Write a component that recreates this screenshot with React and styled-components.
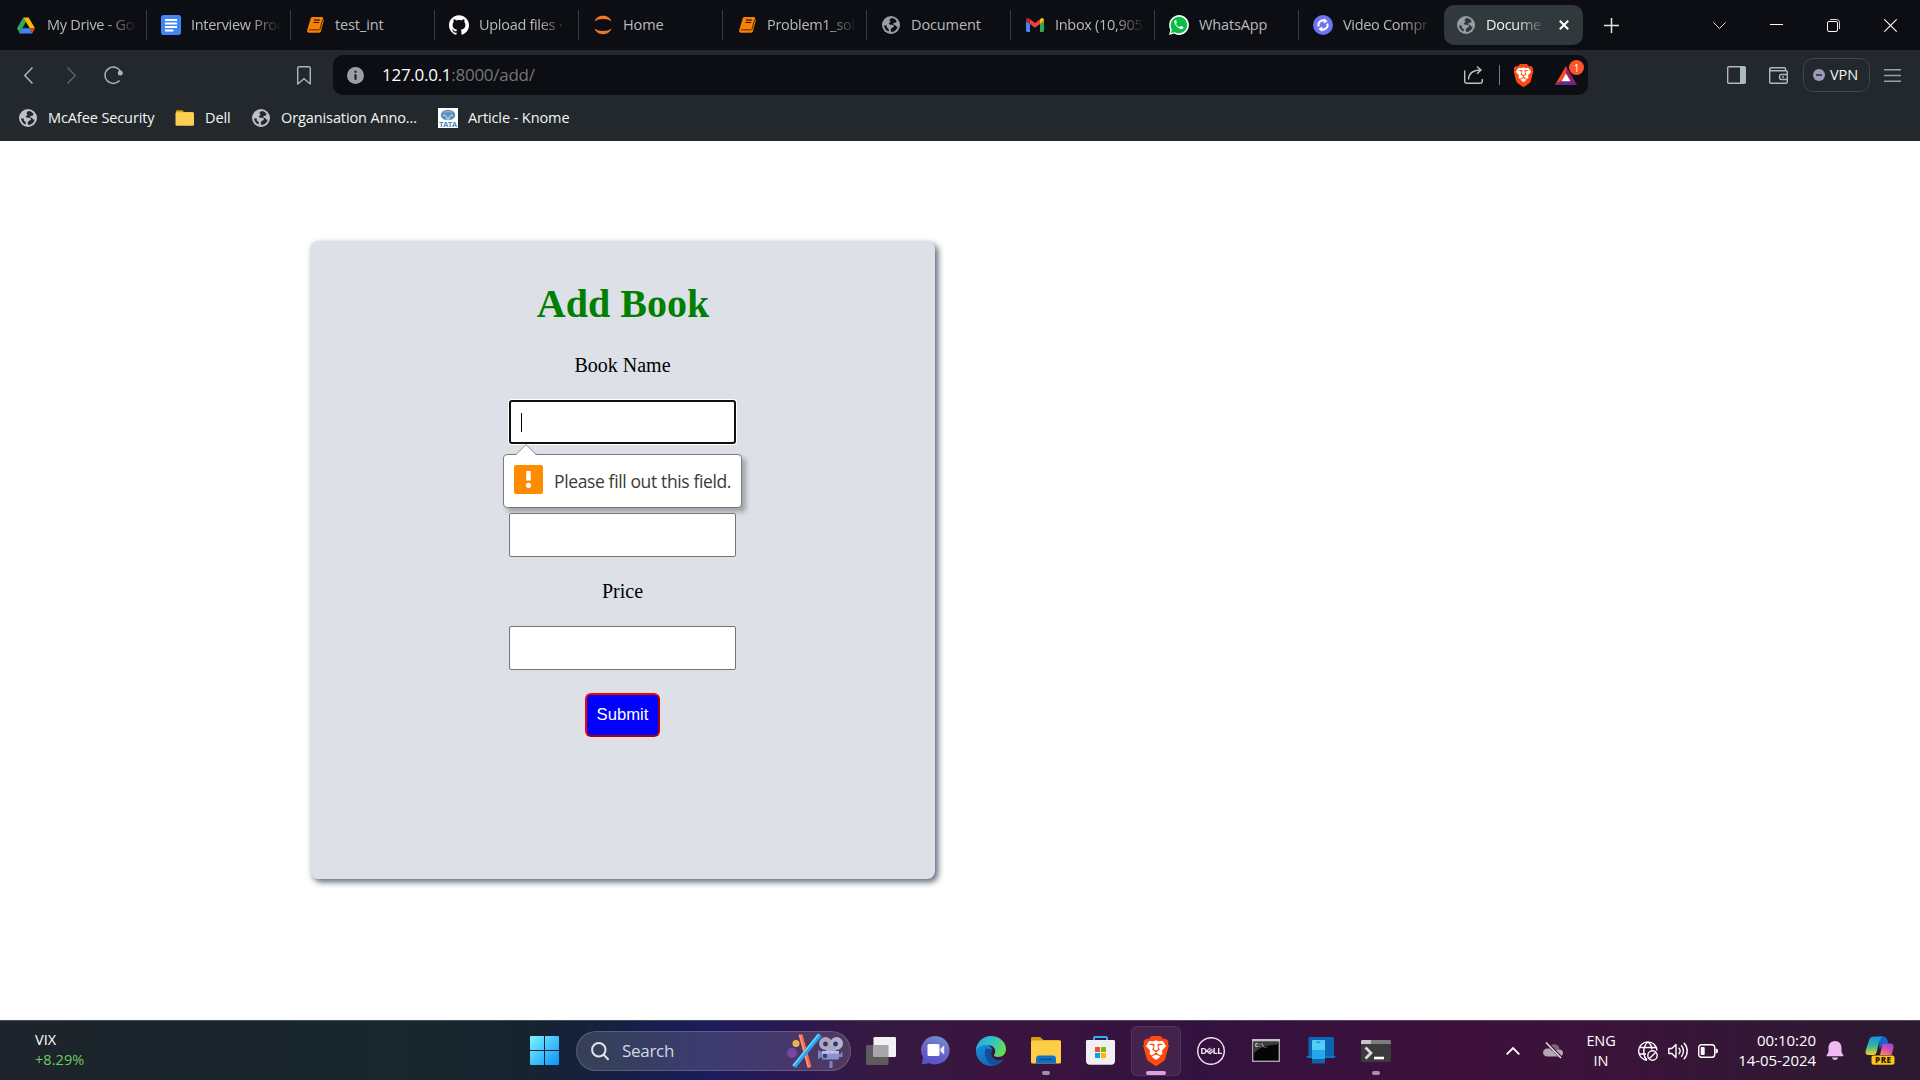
import React from "react";
import styled, { createGlobalStyle, css } from "styled-components";
import { SiBrave, SiDell, SiGithub } from "react-icons/si";

const UI = `"Open Sans", "Noto Sans", sans-serif`;

const GlobalStyle = createGlobalStyle`
  * { box-sizing: border-box; }
  html, body { margin: 0; padding: 0; background: #fff; }
  body { width: 1920px; height: 1080px; overflow: hidden; font-family: ${UI}; }
`;

const Screen = styled.div`
  width: 1920px;
  height: 1080px;
  display: flex;
  flex-direction: column;
`;

/* ---------- shared ---------- */

const Icon = styled.svg`
  display: block;
  flex: none;
  width: ${(p) => p.$w}px;
  height: ${(p) => p.$h || p.$w}px;
  margin-left: ${(p) => p.$ml || 0}px;
  overflow: visible;
`;

/* ---------- tab strip ---------- */

const TabStrip = styled.header`
  height: 50px;
  background: #0d0e13;
  display: flex;
  align-items: center;
  padding-left: 3px;
`;

const Tab = styled.div`
  flex: none;
  width: 144px;
  height: 30px;
  padding-left: ${(p) => (p.$first ? 13 : 14)}px;
  display: flex;
  align-items: center;
  gap: ${(p) => (p.$first ? 11 : 10)}px;
  border-right: 1px solid ${(p) => (p.$line ? "#3b3c40" : "transparent")};
  color: #b9babd;

  ${(p) =>
    p.$active &&
    css`
      width: 139px;
      height: 40px;
      margin-left: 1px;
      padding-left: 12px;
      border: 0;
      border-radius: 10px;
      background: #31393d;
      color: #f1f2f3;
    `}
`;

const TabLabel = styled.span`
  width: ${(p) => p.$w || 90}px;
  overflow: hidden;
  white-space: nowrap;
  font-size: 14.5px;
  line-height: 20px;
  letter-spacing: ${(p) => (p.$fade ? -0.3 : -0.12)}px;
  ${(p) => p.$fade && "mask-image: linear-gradient(90deg, #000 calc(100% - 30px), transparent);"}
`;

/* ---------- toolbar ---------- */

const Toolbar = styled.div`
  height: 50px;
  background: #22282b;
  display: flex;
  align-items: center;
  padding-left: 24px;
`;

const AddressBar = styled.div`
  width: 1255px;
  height: 40px;
  margin-left: 22px;
  padding-left: 14px;
  border-radius: 10px;
  background: #0d0e13;
  display: flex;
  align-items: center;
`;

const Url = styled.div`
  width: 1082px;
  margin-left: 18px;
  font-size: 17px;
  line-height: 24px;
  letter-spacing: -0.27px;
  color: #74767a;
  b { font-weight: 400; color: #fff; }
`;

const Divider = styled.i`
  width: 1px;
  height: 20px;
  margin: 0 12px 0 15px;
  background: #77797d;
`;

const Rewards = styled.div`
  position: relative;
  margin-left: 20px;
`;

const Badge = styled.span`
  position: absolute;
  left: 14px;
  top: -6px;
  width: 15px;
  height: 15px;
  border-radius: 8px;
  background: #fb542b;
  color: #fff;
  font-size: 10px;
  line-height: 16px;
  text-align: center;
`;

const VpnButton = styled.button`
  width: 67px;
  height: 34px;
  margin: 0 0 0 15px;
  padding: 0 0 0 9px;
  border: 1px solid #3d484c;
  border-radius: 10px;
  background: transparent;
  display: flex;
  align-items: center;
  gap: 5px;
  font: 14.5px/20px ${UI};
  letter-spacing: -0.1px;
  color: #f2f4f5;
`;

const Bookmarks = styled.nav`
  height: 41px;
  background: #22282b;
  display: flex;
  align-items: flex-start;
  padding: 8px 0 0 18px;
`;

const Bookmark = styled.div`
  flex: none;
  width: ${(p) => p.$w}px;
  display: flex;
  align-items: center;
  gap: 10px;
  white-space: nowrap;
  font-size: 14.5px;
  line-height: 20px;
  letter-spacing: -0.1px;
  color: #f4f5f5;
`;

/* ---------- page ---------- */

const Page = styled.main`
  height: 879px;
  background: #fff;
  padding: 100px 0 0 310px;
`;

const Card = styled.form`
  width: 625px;
  height: 638px;
  padding-top: 40px;
  border-radius: 8px;
  background: #dde0e7;
  box-shadow: 3px 3px 6px #5a6779;
  display: flex;
  flex-direction: column;
  align-items: center;
  font-family: "Liberation Serif", "Times New Roman", serif;
`;

const Title = styled.h1`
  margin: 0;
  padding-left: 1px;
  font-size: 40px;
  line-height: 46px;
  color: #008000;
`;

const Label = styled.label`
  margin-top: ${(p) => p.$mt}px;
  font-size: 20px;
  line-height: 23px;
  color: #000;
`;

const Field = styled.div`
  position: relative;
  width: 227px;
  height: 44px;
  margin-top: ${(p) => p.$mt}px;
`;

const Input = styled.input`
  display: block;
  width: 227px;
  height: 44px;
  border: 1px solid #767676;
  border-radius: 2px;
  background: #fff;
  outline: 0;
  ${(p) =>
    p.$focused &&
    css`
      border: 2px solid #101010;
      border-radius: 3px;
      box-shadow: 0 0 0 1px #fff;
    `}
`;

const Caret = styled.i`
  position: absolute;
  left: 12px;
  top: 13px;
  width: 1px;
  height: 19px;
  background: #000;
`;

const Bubble = styled.div`
  position: absolute;
  left: -6px;
  top: 54px;
  width: 239px;
  height: 54px;
  padding: 0 0 4px 10px;
  border: 1px solid #7b7b7d;
  border-radius: 4px;
  background: #fff;
  box-shadow: 4px 4px 5px rgba(0, 0, 0, 0.28);
  display: flex;
  align-items: center;
  gap: 11px;
  white-space: nowrap;
  font: 400 17.5px/24px ${UI};
  letter-spacing: -0.37px;
  color: #3a3a3a;
`;

const BubbleText = styled.span`
  padding-top: 4px;
`;

const BubbleArrow = styled.svg`
  position: absolute;
  left: 11px;
  top: -11px;
  width: 22px;
  height: 12px;
`;

const Submit = styled.button`
  width: 75px;
  height: 44px;
  margin-top: 23px;
  padding: 0;
  border: 2px outset #f00;
  border-radius: 6px;
  background: #00f;
  color: #fff;
  font: 16.67px "Liberation Sans", Arial, sans-serif;
`;

/* ---------- taskbar ---------- */

const Taskbar = styled.footer`
  height: 60px;
  border-top: 1px solid #4a4c55;
  background: linear-gradient(90deg, #1e242b 0, #1a252b 200px, #18272e 430px, #17242f 520px, #152044 620px, #1d1c5c 715px, #2b1852 790px, #351a42 870px, #3a143f 1000px, #34123f 1200px, #3d103b 1450px, #3b133a 1600px, #311834 1800px, #2c1a30 1920px);
  display: flex;
  align-items: center;
  color: #fff;
`;

const Widget = styled.div`
  width: 530px;
  padding: 0 0 2px 35px;
  font-size: 14.5px;
  line-height: 20px;
  letter-spacing: 0.05px;
  span { display: block; color: #6ccb5f; }
`;

const SearchPill = styled.div`
  width: 275px;
  height: 40px;
  margin: 0 2px 0 17px;
  padding: 0 7px 0 14px;
  border: 1px solid rgba(255, 255, 255, 0.17);
  border-radius: 20px;
  background: rgba(255, 255, 255, 0.14);
  display: flex;
  align-items: center;
`;

const SearchText = styled.span`
  flex: 1;
  margin-left: 13px;
  font-size: 17px;
  line-height: 24px;
  letter-spacing: -0.3px;
  color: #d6d7e2;
`;

const AppSlot = styled.div`
  position: relative;
  width: 55px;
  height: 59px;
  display: flex;
  align-items: center;
  justify-content: center;
`;

const ActiveTile = styled.div`
  width: 50px;
  height: 50px;
  border: 1px solid rgba(255, 255, 255, 0.08);
  border-radius: 6px;
  background: rgba(255, 255, 255, 0.07);
  display: flex;
  align-items: center;
  justify-content: center;
`;

const Running = styled.i`
  position: absolute;
  bottom: 5px;
  left: calc(50% - ${(p) => (p.$active ? 10 : 4)}px);
  width: ${(p) => (p.$active ? 20 : 8)}px;
  height: 4px;
  border-radius: 2px;
  background: ${(p) => (p.$active ? "#dd9fe3" : "#a391a9")};
`;

const Tray = styled.div`
  flex: 1;
  display: flex;
  align-items: center;
  padding-left: 103px;
`;

const TrayText = styled.div`
  width: ${(p) => p.$w}px;
  margin-left: ${(p) => p.$ml}px;
  padding-bottom: ${(p) => p.$lift || 0}px;
  white-space: nowrap;
  display: flex;
  flex-direction: column;
  align-items: ${(p) => p.$align};
  font-size: ${(p) => p.$size}px;
  line-height: 20px;
  letter-spacing: ${(p) => p.$ls}px;
`;

/* ---------- drawings ---------- */

const Globe = ({ fg = "#9a9ea3", bg = "#0d0e13", w = 18 }) => (
  <Icon $w={w} viewBox="0 0 18 18">
    <circle cx="9" cy="9" r="9" fill={fg} />
    <path
      fill={bg}
      d="M9.6 2c-1 .5-1.800 1.100-2 2-.2 1 .8 1 .9 1.700 0 .8-1.200.7-1.600 1.400-.4.800.4 1.500 1.500 1.600 1.500 0 2.700-.2 3.300.700.5.800-.1 1.700-.9 2.200-.9.500-1.700.9-2 1.900-.2.900.2 1.700.7 2.500 3.200-.3 5.700-2.600 6.300-5.600-.7.400-1.500.3-1.900-.4-.5-1-1.600-1-2.300-1.500-.6-.5-.4-1.300.3-1.600.8-.3 1.900-.2 2.400-1 .3-.6 0-1.200-.5-1.800C12.700 2.900 11.300 2 9.600 2zM2 9.200c.2 2.900 2 5.200 4.500 6.200.4-.8.500-1.700 0-2.400-.5-.7-1.400-.9-1.700-1.700-.2-.700.3-1.300-.2-1.700C4 9.100 2.800 9.700 2 9.200z"
    />
  </Icon>
);

const Drive = () => (
  <Icon $w={18} $h={17} viewBox="0 0 18 17">
    <path fill="#34a853" d="M6.300.4 0 11.200l2.600 4.900L9 4.700z" />
    <path fill="#fbbc04" d="M6.300.4h5.300L18 11.200h-5.200z" />
    <path fill="#4285f4" d="M5.200 11.200h7.600l2.600 5.300H2.600L2.600 15.600z" />
    <path fill="#ea4335" d="M12.800 11.200H18l-2.600 5.100z" />
  </Icon>
);

const Docs = () => (
  <Icon $w={20} viewBox="0 0 20 20">
    <rect width="20" height="20" rx="2.500" fill="#4285f4" />
    <path stroke="#fff" strokeWidth="2" d="M4 5h12M4 8.500h12M4 12h12M4 15.500h8.500" />
  </Icon>
);

const Notebook = () => (
  <Icon $w={17} $h={16} viewBox="0 0 17 16">
    <path fill="#f98000" d="M5.500 0h9.300c.9 0 1.400.6 1.200 1.400l.5 1.500c.2.500.2.900 0 1.500l-2.500 9.700c-.3 1-1 1.600-2 1.600H2c-1.400 0-2.200-1.200-1.800-2.500L3.800 1.300C4.100.4 4.700 0 5.500 0z" />
    <path fill="none" stroke="#3a2207" strokeWidth=".9" d="M2 12.900h9.800c.6 0 1-.3 1.200-.9L15.700 2.500" />
    <path stroke="#2a1a0a" strokeWidth="1.200" d="M7 3.100h5.800M6.300 5.500h5.800" />
  </Icon>
);

const Jupyter = () => (
  <Icon $w={20} viewBox="0 0 20 20">
    <path fill="#f37726" d="M1.500 6.500C3 2.500 6.200.8 10 .8s7 1.700 8.500 5.700C16.500 4.800 13.500 4 10 4s-6.500.8-8.500 2.500zM1.500 13.500c1.500 4 4.700 5.700 8.500 5.700s7-1.700 8.500-5.700C16.500 15.200 13.500 16 10 16s-6.500-.8-8.500-2.500z" />
  </Icon>
);

const Gmail = () => (
  <Icon $w={18} $h={14} viewBox="0 0 18 14">
    <path fill="#4285f4" d="M0 3l4 2.800V14H1.300C.5 14 0 13.500 0 12.800z" />
    <path fill="#34a853" d="M18 3l-4 2.800V14h2.700c.8 0 1.300-.5 1.300-1.200z" />
    <path fill="#c5221f" d="M0 2c0-1.600 1.700-2.500 3-1.600L4 1.200v4.700L0 3.100z" />
    <path fill="#fbbc04" d="M18 2c0-1.600-1.700-2.500-3-1.600l-1 .8v4.700l4-2.800z" />
    <path fill="#ea4335" d="M4 1.200l5 3.900 5-3.900v4.700L9 9.700 4 5.900z" />
  </Icon>
);

const WhatsApp = () => (
  <Icon $w={20} viewBox="0 0 20 20">
    <path fill="#fff" d="M0 20l1.400-5.100A9.900 9.900 0 1 1 5.100 18.600z" />
    <path fill="#08bf44" d="M2 18l.9-3.400a8.300 8.300 0 1 1 2.700 2.600z" />
    <path fill="#fff" d="M7.200 5.300c-.3-.5-.8-.5-1.200-.1-.7.700-1 1.700-.5 2.900 1 2.600 3.200 4.900 6 5.900 1.200.4 2.300 0 2.800-.9.300-.6.300-1-.1-1.200l-1.800-.9c-.4-.2-.6-.1-.9.300l-.6.800c-.3.200-.6.100-1.300-.3-1-.6-1.800-1.300-2.500-2.500-.1-.3 0-.5.200-.7l.5-.8c.1-.2 0-.4 0-.6z" />
  </Icon>
);

const VideoComp = () => (
  <Icon $w={20} viewBox="0 0 20 20">
    <circle cx="10" cy="10" r="10" fill="#6c74f4" />
    <path fill="none" stroke="#fff" strokeWidth="2" d="M5.700 11.500a4.500 4.500 0 0 1 6-5.700M14.300 8.500a4.500 4.500 0 0 1-6 5.700" />
    <path fill="#fff" d="M11 3.300l3.600 3-3.900 2.200zM9 16.700l-3.600-3 3.900-2.200z" />
  </Icon>
);

const BraveMark = styled(SiBrave)`
  display: block;
  flex: none;
  width: ${(p) => p.$w}px;
  height: ${(p) => p.$w}px;
  color: #ff4a0f;
  background: radial-gradient(ellipse 36% 38% at 50% 47%, #fff 97%, transparent);
`;

const GithubMark = styled(SiGithub)`
  display: block;
  flex: none;
  width: 20px;
  height: 20px;
  color: #fff;
`;

const DellMark = styled(SiDell)`
  display: block;
  width: 28px;
  height: 28px;
  color: #efe6ee;
`;

const TABS = [
  { label: "My Drive - Go", icon: <Drive />, fade: true },
  { label: "Interview Proc", icon: <Docs />, fade: true },
  { label: "test_int", icon: <Notebook /> },
  { label: "Upload files ·", icon: <GithubMark />, fade: true },
  { label: "Home", icon: <Jupyter /> },
  { label: "Problem1_sol", icon: <Notebook />, fade: true },
  { label: "Document", icon: <Globe /> },
  { label: "Inbox (10,905", icon: <Gmail />, fade: true },
  { label: "WhatsApp", icon: <WhatsApp /> },
  { label: "Video Compr", icon: <VideoComp />, fade: true, last: true },
];

const IconCell = styled.span`
  width: 20px;
  flex: none;
  display: flex;
  justify-content: center;
`;

function Tabs() {
  return (
    <TabStrip>
      {TABS.map((t, i) => (
        <Tab key={i} $line={!t.last} $first={i === 0}>
          <IconCell>{t.icon}</IconCell>
          <TabLabel $fade={t.fade}>{t.label}</TabLabel>
        </Tab>
      ))}
      <Tab $active>
        <IconCell><Globe bg="#31393d" /></IconCell>
        <TabLabel $w={60} $fade>Docume</TabLabel>
        <Icon $w={10} $ml={3} viewBox="0 0 10 10">
          <path stroke="#fff" strokeWidth="2" d="M.8.8l8.400 8.400M9.200.8.800 9.200" />
        </Icon>
      </Tab>
      <Icon $w={15} $ml={21} viewBox="0 0 15 15">
        <path stroke="#e6e7e8" strokeWidth="1.500" d="M7.500 0v15M0 7.500h15" />
      </Icon>
      <Icon $w={13} $h={7} $ml={94} viewBox="0 0 13 7">
        <path fill="none" stroke="#dcdcde" d="M.3.300l6.200 6.200L12.700.3" />
      </Icon>
      <Icon $w={13} $h={2} $ml={44} viewBox="0 0 13 2">
        <path stroke="#fff" d="M0 .5h13" />
      </Icon>
      <Icon $w={13} $ml={44} viewBox="0 0 13 13">
        <rect x=".5" y="2.500" width="10" height="10" rx="1.500" fill="none" stroke="#fff" />
        <path fill="none" stroke="#d8d8da" d="M3 .500h6.500a3 3 0 0 1 3 3V10" />
      </Icon>
      <Icon $w={13} $ml={44} viewBox="0 0 13 13">
        <path stroke="#fff" strokeWidth="1.100" d="M.3.300l12.400 12.400M12.700.3.3 12.700" />
      </Icon>
    </TabStrip>
  );
}

function Nav() {
  return (
    <Toolbar>
      <Icon $w={9} $h={17} viewBox="0 0 9 17">
        <path fill="none" stroke="#a9b8be" strokeWidth="1.500" d="M8.500.5.800 8.500l7.700 8" />
      </Icon>
      <Icon $w={9} $h={17} $ml={34} viewBox="0 0 9 17">
        <path fill="none" stroke="#596166" strokeWidth="1.500" d="M.5.500l7.700 8-7.700 8" />
      </Icon>
      <Icon $w={19} $h={18} $ml={28} viewBox="0 0 19 18">
        <path fill="none" stroke="#a9b8be" strokeWidth="1.500" d="M15.500 14.500A8.200 8.200 0 1 1 16.500 5.500" />
        <circle cx="16.300" cy="7" r="2.500" fill="#a9b8be" />
      </Icon>
      <Icon $w={14} $h={19} $ml={174} viewBox="0 0 14 19">
        <path fill="none" stroke="#a9b8be" strokeWidth="1.400" strokeLinejoin="round" d="M.7 2.200C.7 1.300 1.300.700 2.200.700h9.600c.9 0 1.500.6 1.500 1.500V18L7 12.800.7 18z" />
      </Icon>
      <AddressBar>
        <Icon $w={17} viewBox="0 0 17 17">
          <circle cx="8.500" cy="8.500" r="8.500" fill="#9b9fa4" />
          <path stroke="#15171b" strokeWidth="2" d="M8.500 7.300v5.500M8.500 3.800v2" />
        </Icon>
        <Url><b>127.0.0.1</b>:8000/add/</Url>
        <Icon $w={20} $h={18} viewBox="0 0 20 18">
          <path fill="none" stroke="#bfc1c4" strokeWidth="1.400" d="M.7 4.500V15c0 1.400.8 2.200 2.200 2.200h13.200c1.400 0 2.200-.8 2.200-2.200v-2M4.500 13.500c.2-6 4-9.500 12.500-9.500M13 .500l4 3.500-4 3.700" />
        </Icon>
        <Divider />
        <BraveMark $w={23} />
        <Rewards>
          <Icon $w={22} $h={19} viewBox="0 0 22 19">
            <path fill="#ff4724" d="M11 0v8L6.500 15 0 19z" />
            <path fill="#9e1f63" d="M11 0l11 19-6.500-4L11 8z" />
            <path fill="#662d91" d="M0 19l6.500-4h9L22 19z" />
            <path fill="#fff" d="M11 7.500l4.600 7.800H6.400z" />
          </Icon>
          <Badge>1</Badge>
        </Rewards>
      </AddressBar>
      <Icon $w={19} $h={18} $ml={139} viewBox="0 0 19 18">
        <rect x=".7" y=".7" width="17.600" height="16.600" rx="1" fill="none" stroke="#a9bac1" strokeWidth="1.400" />
        <path fill="#a9bac1" d="M13 1h5v16h-5z" />
      </Icon>
      <Icon $w={19} $h={17} $ml={23} viewBox="0 0 19 17">
        <path fill="none" stroke="#a9bac1" strokeWidth="1.400" d="M16.500 3.500V2c0-.8-.5-1.300-1.300-1.300H2.400C1.300.700.700 1.300.700 2.100S1.300 3.700 2.200 3.700h14.600c.9 0 1.500.6 1.500 1.500v9.600c0 .9-.6 1.500-1.500 1.500H2.200c-.9 0-1.500-.6-1.500-1.500V2M18 7.500h-5.500c-1.200 0-2 .8-2 2v1c0 1.200.8 2 2 2H18M13.200 10h1.800" />
      </Icon>
      <VpnButton>
        <Icon $w={12} viewBox="0 0 12 12">
          <circle cx="6" cy="6" r="6" fill="#9c9ab8" />
          <path stroke="#22282b" strokeWidth="1.500" d="M3 6h6" />
        </Icon>
        VPN
      </VpnButton>
      <Icon $w={17} $h={13} $ml={14} viewBox="0 0 17 13">
        <path stroke="#8fa3ab" strokeWidth="1.400" d="M0 .7h17M0 6.500h17M0 12.300h17" />
      </Icon>
    </Toolbar>
  );
}

const Folder = () => (
  <Icon $w={20} $h={17} viewBox="0 0 20 17">
    <path fill="#d89c10" d="M1 1.500C1 .7 1.500.2 2.300.2h5L9 2h9v4H1z" />
    <rect x=".5" y="2.300" width="18.500" height="13.500" rx="1.300" fill="#fbd050" />
  </Icon>
);

const TataText = styled.text`
  font: 700 6.5px "Liberation Sans", sans-serif;
`;

const Tata = () => (
  <Icon $w={20} viewBox="0 0 20 20">
    <rect width="20" height="20" fill="#fff" />
    <ellipse cx="10" cy="7" rx="7.300" ry="5.300" fill="#5a8fc4" />
    <path fill="none" stroke="#fff" strokeWidth=".9" d="M9 12.500c.2-3.500-.3-5-4-5.500M11 12.500c-.2-3.500.3-5 4-5.500" />
    <path fill="none" stroke="#c4d9ec" strokeWidth=".6" d="M6 4.200c2.500-.8 5.500-.8 8 0" />
    <TataText x="10" y="19" textAnchor="middle" fill="#3f7fbd" textLength="18" lengthAdjust="spacingAndGlyphs">TATA</TataText>
  </Icon>
);

function BookmarkBar() {
  return (
    <Bookmarks>
      <Bookmark $w={157}><IconCell><Globe fg="#bdc1c6" bg="#22282b" /></IconCell>McAfee Security</Bookmark>
      <Bookmark $w={76}><IconCell><Folder /></IconCell>Dell</Bookmark>
      <Bookmark $w={187}><IconCell><Globe fg="#bdc1c6" bg="#22282b" /></IconCell>Organisation Anno...</Bookmark>
      <Bookmark $w={150}><IconCell><Tata /></IconCell>Article - Knome</Bookmark>
    </Bookmarks>
  );
}

function AddBook() {
  return (
    <Page>
      <Card>
        <Title>Add Book</Title>
        <Label $mt={27}>Book Name</Label>
        <Field $mt={23}>
          <Input $focused readOnly />
          <Caret />
          <Bubble>
            <BubbleArrow viewBox="0 0 22 12">
              <path fill="#fff" d="M0 12L11 .8 22 12z" />
              <path fill="none" stroke="#8f9093" d="M.5 10.800L11 .7l10.500 10.100" />
            </BubbleArrow>
            <Icon $w={29} viewBox="0 0 29 29">
              <rect width="29" height="29" rx="2" fill="#ff8c00" />
              <path stroke="#fff" strokeWidth="4.500" d="M14.500 6v9.500" />
              <circle cx="14.500" cy="20.300" r="2.600" fill="#fff" />
            </Icon>
            <BubbleText>Please fill out this field.</BubbleText>
          </Bubble>
        </Field>
        <Field $mt={69}><Input readOnly /></Field>
        <Label $mt={23}>Price</Label>
        <Field $mt={23}><Input readOnly /></Field>
        <Submit type="button">Submit</Submit>
      </Card>
    </Page>
  );
}

/* ---------- taskbar drawings ---------- */

const Windows = () => (
  <Icon $w={29} viewBox="0 0 29 29">
    <defs>
      <linearGradient id="win" x1="0" y1="0" x2="1" y2="1">
        <stop offset="0" stopColor="#7df3ff" />
        <stop offset="1" stopColor="#0a93fa" />
      </linearGradient>
    </defs>
    <path fill="url(#win)" d="M1 0h13v14H0V1a1 1 0 0 1 1-1zM15 0h13a1 1 0 0 1 1 1v13H15zM0 15h14v14H1a1 1 0 0 1-1-1zM15 15h14v13a1 1 0 0 1-1 1H15z" />
  </Icon>
);

const MovieArt = () => (
  <Icon $w={56} $h={34} viewBox="0 0 56 34">
    <circle cx="9" cy="9.500" r="3.500" fill="#f3b04c" />
    <circle cx="5" cy="19" r="5" fill="#7447a8" />
    <path stroke="#ff6a4d" strokeWidth="4" d="M13.500.5l9 33" />
    <path stroke="#ffab94" strokeWidth="1" d="M12.500.5l9 33" />
    <path stroke="#27a4ea" strokeWidth="4.500" d="M33 .5L7 32.500" />
    <path stroke="#7fd4fb" strokeWidth="1.200" d="M31.500.5L6 32" />
    <path fill="#7c83c0" d="M31 16l5 2.500v4L31 25zM50 20h4v-2h1.500v5H50zM42.500 27h3v7h-3z" />
    <circle cx="38.500" cy="9.500" r="6.500" fill="#a9a7c2" />
    <circle cx="49.500" cy="9.500" r="6.500" fill="#b5b3cb" />
    <rect x="39" y="12" width="10" height="6" fill="#a9a7c2" />
    <rect x="35" y="17" width="17" height="8.500" rx="1.500" fill="#8b93cb" />
    <path fill="#bac0ec" d="M35 17h17v2.500H35z" />
    <circle cx="38.500" cy="10" r="2.400" fill="#33356b" />
    <circle cx="48.500" cy="10" r="2.400" fill="#33356b" />
    <circle cx="38" cy="22" r="2.200" fill="#34407f" />
  </Icon>
);

const TaskView = () => (
  <Icon $w={30} $h={28} viewBox="0 0 30 28">
    <rect y="8" width="22.500" height="20" rx="1.200" fill="#5d5c5e" />
    <rect x="7.500" width="22.500" height="20" rx="1.200" fill="#f2f1f3" />
    <path fill="#a9a5ab" d="M7.500 8h15v12h-15z" />
  </Icon>
);

const Chat = () => (
  <Icon $w={29} $h={29} viewBox="0 0 29 29">
    <defs>
      <linearGradient id="chat" x1=".7" y1="0" x2=".3" y2="1">
        <stop offset="0" stopColor="#6f93cf" />
        <stop offset=".4" stopColor="#6f68c4" />
        <stop offset="1" stopColor="#5452c8" />
      </linearGradient>
    </defs>
    <path fill="url(#chat)" d="M14.700 0a14.200 14.200 0 1 1-6 27.200L.8 28.200l1.300-6.700A14.200 14.200 0 0 1 14.700 0z" />
    <rect x="6.500" y="8" width="12" height="12" rx="1.500" fill="#fff" />
    <path fill="#e8ecfb" d="M19.500 12.500l3.700-3v9l-3.700-3z" />
  </Icon>
);

const Edge = () => (
  <Icon $w={30} viewBox="0 0 30 30">
    <defs>
      <linearGradient id="edgeTop" x1="0" y1=".2" x2="1" y2=".6">
        <stop offset="0" stopColor="#2aa7e0" />
        <stop offset=".5" stopColor="#31c2c4" />
        <stop offset="1" stopColor="#66e04a" />
      </linearGradient>
      <linearGradient id="edgeBody" x1="0" y1="0" x2=".6" y2="1">
        <stop offset="0" stopColor="#1a9be6" />
        <stop offset="1" stopColor="#0f66b8" />
      </linearGradient>
    </defs>
    <path fill="url(#edgeBody)" d="M15 0a15 15 0 1 0 12.500 23.200C22 26 17 24 15.500 20c-1-3-.5-5 1-7L12 8 15 0z" />
    <path fill="#124f96" d="M9.500 12.500c-2.500 7 2 15.500 8.500 17.200 4-.7 7.500-3 9.500-6.500-3.500 2-8 1.600-10.500-1-2.500-2.500-2.500-6 0-9z" />
    <path fill="url(#edgeTop)" d="M0 14C1 5.500 7.500 0 15 0c8.500 0 15 6 15 13 0 5-3.500 8-8 8-3 0-4.500-1-4-2.200 1-1.300 1.300-2.500 1.200-4C19 11.500 16 9 11.500 9 6 9 2 11 0 14z" />
  </Icon>
);

const Explorer = () => (
  <Icon $w={30} $h={27} viewBox="0 0 30 27">
    <path fill="#dc9a0b" d="M0 1.500C0 .6.600 0 1.500 0H9l3.500 3H28c1.200 0 2 .8 2 2v6H0z" />
    <rect y="3.500" width="30" height="23" rx="1.500" fill="#ffce47" />
    <path fill="#0f73c4" d="M5 26.500V22c0-2 1.200-3.500 3-3.500h14c1.800 0 3 1.500 3 3.500v4.500z" />
    <path stroke="#0a4f94" strokeWidth="1.500" d="M8.500 22.500h13" />
  </Icon>
);

const Store = () => (
  <Icon $w={29} $h={29} viewBox="0 0 29 29">
    <path fill="none" stroke="#27b4f0" strokeWidth="2" d="M8 6V2c0-.6.400-1 1-1h11c.6 0 1 .4 1 1v4" />
    <path fill="#f0f0f2" d="M0 5.500C0 4.700.500 4 1.300 4h26.400c.8 0 1.300.7 1.300 1.500V25c0 2.200-1.500 3.700-3.700 3.700H3.700C1.500 28.700 0 27.200 0 25z" />
    <path fill="#f25022" d="M9 11h5v5H9z" />
    <path fill="#7fba00" d="M15 11h5v5h-5z" />
    <path fill="#00a4ef" d="M9 17h5v5H9z" />
    <path fill="#ffb900" d="M15 17h5v5h-5z" />
  </Icon>
);

const PromptText = styled.text`
  font: 700 5px "Liberation Mono", monospace;
`;

const Cmd = () => (
  <Icon $w={28} $h={23} viewBox="0 0 28 23">
    <rect x=".7" y=".7" width="26.600" height="21.600" fill="#050505" stroke="#a8a6ab" strokeWidth="1.400" />
    <path fill="#c3c1c6" d="M0 0h28v2.500H0z" />
    <path fill="#3c3c40" d="M1.500 3h25v2.500C14 6 6 9 1.500 15z" />
    <PromptText x="3" y="8" fill="#eee">C:\_</PromptText>
  </Icon>
);

const PhoneLink = () => (
  <Icon $w={30} $h={27} viewBox="0 0 30 27">
    <rect x="2.500" width="25.500" height="20" rx="1.500" fill="#0a66b5" />
    <path fill="#0b78c9" d="M0 19h30l-2 2H2z" />
    <rect x="6" y="3" width="13" height="20" rx="1" fill="#23a9ea" />
    <path fill="#51cdf7" d="M6 4c0-.6.400-1 1-1h11c.6 0 1 .400 1 1v9H6z" />
    <path fill="#0c62ae" d="M6 22h13v4.500H6z" />
    <path stroke="#0a78bd" strokeWidth="1" d="M10.500 5.200h4" />
  </Icon>
);

const Terminal = () => (
  <Icon $w={30} $h={22} viewBox="0 0 30 22">
    <rect width="30" height="22" rx="1.500" fill="#3b3a3c" />
    <path fill="#7f7a80" d="M10 0h18.500c.9 0 1.500.6 1.500 1.500V4H10z" />
    <path fill="#c9c4ca" d="M0 1.500C0 .6.600 0 1.500 0H10v4H0z" />
    <path fill="none" stroke="#dcdadd" strokeWidth="2.700" d="M4.500 7.500l5.500 5.500-5.500 5.500" />
    <path stroke="#fff" strokeWidth="2.600" d="M13 18h10" />
  </Icon>
);

const PreText = styled.text`
  font: 800 8px ${UI};
`;

const Copilot = () => (
  <Icon $w={30} $h={29} $ml={21} viewBox="0 0 30 29">
    <defs>
      <linearGradient id="coA" x1="0" y1="0" x2="0" y2="1">
        <stop offset="0" stopColor="#1c8df0" />
        <stop offset=".5" stopColor="#30b79a" />
        <stop offset="1" stopColor="#f4d321" />
      </linearGradient>
      <linearGradient id="coB" x1=".7" y1="0" x2=".2" y2="1">
        <stop offset="0" stopColor="#8d4be8" />
        <stop offset=".6" stopColor="#e0559e" />
        <stop offset="1" stopColor="#f58a5c" />
      </linearGradient>
    </defs>
    <path fill="#1566c9" d="M14 .5h4.500c2 0 3 1 3.700 3l1.300 4.200h-5l-4 5z" />
    <path fill="url(#coA)" d="M9 .5h8.500c-2 1.500-3 4-4 8l-2 8c-.5 1.700-1.400 2.500-3 2.500H3.500C1 19 0 17 .7 14.500l3.600-11C5 1.500 6.500.5 9 .5z" />
    <path fill="url(#coB)" d="M19.500 7.500h6c2.500 0 3.600 1.800 3 4.300L26.500 19H15l2-9c.4-1.600 1-2.500 2.500-2.500z" />
    <rect x="6.500" y="19.500" width="23" height="9.300" rx="2" fill="#fcc419" />
    <PreText x="18" y="27" textAnchor="middle" fill="#2b1c05" textLength="16">PRE</PreText>
  </Icon>
);

function Apps() {
  return (
    <>
      <AppSlot><TaskView /></AppSlot>
      <AppSlot><Chat /></AppSlot>
      <AppSlot><Edge /></AppSlot>
      <AppSlot><Explorer /><Running /></AppSlot>
      <AppSlot><Store /></AppSlot>
      <AppSlot><ActiveTile><BraveMark $w={30} /></ActiveTile><Running $active /></AppSlot>
      <AppSlot><DellMark /></AppSlot>
      <AppSlot><Cmd /></AppSlot>
      <AppSlot><PhoneLink /></AppSlot>
      <AppSlot><Terminal /><Running /></AppSlot>
    </>
  );
}

function SystemTray() {
  return (
    <Tray>
      <Icon $w={14} $h={8} viewBox="0 0 14 8">
        <path fill="none" stroke="#fff" strokeWidth="1.800" d="M.7 7.300L7 1l6.300 6.300" />
      </Icon>
      <Icon $w={20} $h={17} $ml={23} viewBox="0 0 20 17">
        <path fill="#7d6680" d="M6 5.500A5.500 5.500 0 0 1 16.500 7L13 12 5 8z" />
        <path fill="#b7a5b8" d="M4.500 6.500c2 0 3 .8 4 2.500L17 7.500c2 .3 3 1.800 3 3.500s-1.300 3.500-3.500 3.500H4.200C1.800 14.500 0 12.800 0 10.500s2-4 4.500-4z" />
        <path stroke="#3c133a" strokeWidth="3" d="M3 0l15.500 16" />
        <path stroke="#f0e8f0" strokeWidth="1.400" d="M3 .5l15 15.500" />
      </Icon>
      <TrayText $w={30} $ml={23} $align="center" $size={14.5} $ls={-0.1}><span>ENG</span><span>IN</span></TrayText>
      <Icon $w={20} $ml={22} viewBox="0 0 20 20">
        <g fill="none" stroke="#fff" strokeWidth="1.400">
          <path d="M19 9.500A9.200 9.200 0 1 0 9 19.200M1.500 6.500h17M1.500 13H8M9 19C4.500 15 4.500 5 10 1c2.500 2 3.800 4.700 4 7.500" />
          <circle cx="14.500" cy="14.500" r="4.700" />
          <path d="M11.200 17.800l6.600-6.600" />
        </g>
      </Icon>
      <Icon $w={20} $h={18} $ml={10} viewBox="0 0 20 18">
        <g fill="none" stroke="#fff" strokeWidth="1.400" strokeLinecap="round" strokeLinejoin="round">
          <path d="M.8 6.500v5h3L8 15.500v-13L3.800 6.500zM11 6.300c1.300 1.500 1.300 3.900 0 5.400M13.500 3.800c2.600 2.800 2.600 7.600 0 10.400M16.200 1.200c4 4.300 4 11.300 0 15.600" />
        </g>
      </Icon>
      <Icon $w={20} $h={14} $ml={10} viewBox="0 0 20 14">
        <rect x=".7" y=".7" width="16" height="12.600" rx="2.800" fill="none" stroke="#fff" strokeWidth="1.400" />
        <rect x="2.700" y="3" width="4" height="8" rx="1" fill="#fff" />
        <path fill="#fff" d="M17.500 4.500c1.600 0 2.500.8 2.500 2.500s-.9 2.500-2.500 2.500z" />
      </Icon>
      <TrayText $w={80} $ml={18} $align="flex-end" $size={15} $ls={-0.05} $lift={2}><span>00:10:20</span><span>14-05-2024</span></TrayText>
      <Icon $w={18} $h={19} $ml={10} viewBox="0 0 18 19">
        <path fill="#efb9f2" d="M9 0c3.700 0 6.500 2.800 6.500 6.500V11l1.800 3.200c.3.600 0 1.100-.6 1.100H1.300c-.6 0-.9-.5-.6-1.100L2.500 11V6.500C2.500 2.800 5.300 0 9 0zM6 16.500h6c-.3 1.500-1.500 2.500-3 2.500s-2.700-1-3-2.500z" />
      </Icon>
      <Copilot />
    </Tray>
  );
}

export default function App() {
  return (
    <Screen>
      <GlobalStyle />
      <Tabs />
      <Nav />
      <BookmarkBar />
      <AddBook />
      <Taskbar>
        <Widget>VIX<span>+8.29%</span></Widget>
        <Windows />
        <SearchPill>
          <Icon $w={18} viewBox="0 0 18 18">
            <g fill="none" stroke="#e3e3ea" strokeWidth="2" strokeLinecap="round">
              <circle cx="7.800" cy="7.800" r="6.700" />
              <path d="M12.700 12.700l4.300 4.500" />
            </g>
          </Icon>
          <SearchText>Search</SearchText>
          <MovieArt />
        </SearchPill>
        <Apps />
        <SystemTray />
      </Taskbar>
    </Screen>
  );
}
